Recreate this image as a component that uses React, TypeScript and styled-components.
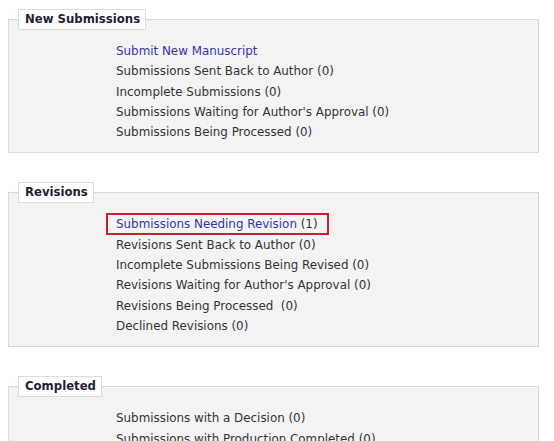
import React from 'react'
import styled, { createGlobalStyle } from 'styled-components'

const GlobalStyle = createGlobalStyle`
  body {
    margin: 8px;
    background: #ffffff;
    font-family: "DejaVu Sans", Verdana, sans-serif;
    color: #333333;
  }
`

const Page = styled.div`
  display: flex;
  flex-direction: column;
  gap: 29px;
  width: 531px;
  padding-top: 1px;
`

const Panel = styled.fieldset`
  margin: 0;
  padding: 11px 0 10px 0;
  background: #f3f3f3;
  border: 1px solid #d9d9d9;
  min-width: 0;
`

const Legend = styled.legend`
  margin-left: 9px;
  padding: 2px 5px 3px 6px;
  background: #ffffff;
  border: 1px solid #dcdcdc;
  font-size: 11.7px;
  font-weight: bold;
  color: #1f1f33;
`

const List = styled.ul`
  list-style: none;
  margin: 0;
  padding: 0 0 0 107px;
`

const Item = styled.li`
  font-size: 11.9px;
  line-height: 20.3px;
  white-space: nowrap;
`

const Link = styled.a`
  color: #3636a6;
  text-decoration: none;
`

const Highlight = styled.span`
  margin-left: -10px;
  padding: 2px 9px 2px 8px;
  border: 2px solid #cc1f2e;
`

interface Entry {
  label: string;
  count?: string;
  link?: boolean;
  flagged?: boolean;
}

const sections: { title: string; items: Entry[] }[] = [
  {
    title: 'New Submissions',
    items: [
      { label: 'Submit New Manuscript', link: true },
      { label: 'Submissions Sent Back to Author', count: '(0)' },
      { label: 'Incomplete Submissions', count: '(0)' },
      { label: "Submissions Waiting for Author's Approval", count: '(0)' },
      { label: 'Submissions Being Processed', count: '(0)' },
    ],
  },
  {
    title: 'Revisions',
    items: [
      { label: 'Submissions Needing Revision', count: '(1)', link: true, flagged: true },
      { label: 'Revisions Sent Back to Author', count: '(0)' },
      { label: 'Incomplete Submissions Being Revised', count: '(0)' },
      { label: "Revisions Waiting for Author's Approval", count: '(0)' },
      { label: 'Revisions Being Processed ', count: '\u00a0(0)' },
      { label: 'Declined Revisions', count: '(0)' },
    ],
  },
  {
    title: 'Completed',
    items: [
      { label: 'Submissions with a Decision', count: '(0)' },
      { label: 'Submissions with Production Completed', count: '(0)' },
    ],
  },
]

const Row: React.FC<{ entry: Entry }> = ({ entry }) => {
  const text = entry.link
    ? <><Link href="#">{entry.label}</Link>{entry.count ? ` ${entry.count}` : ''}</>
    : <>{entry.label} {entry.count}</>
  return <Item>{entry.flagged ? <Highlight>{text}</Highlight> : text}</Item>
}

const App: React.FC = () => {
  return (
    <>
      <GlobalStyle />
      <Page>
        {sections.map((s) => (
          <Panel key={s.title}>
            <Legend>{s.title}</Legend>
            <List>
              {s.items.map((e) => <Row key={e.label} entry={e} />)}
            </List>
          </Panel>
        ))}
      </Page>
    </>
  )
}

export default App
